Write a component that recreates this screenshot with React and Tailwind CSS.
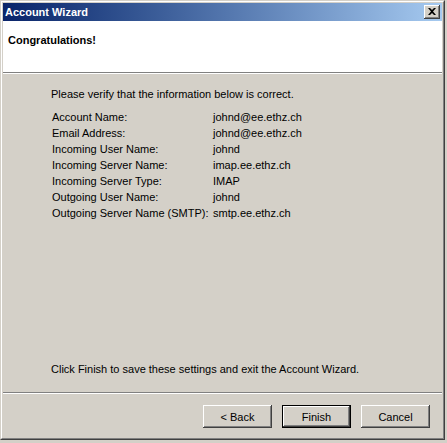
import React from 'react';

const rows = [
  ['Account Name:', 'johnd@ee.ethz.ch'],
  ['Email Address:', 'johnd@ee.ethz.ch'],
  ['Incoming User Name:', 'johnd'],
  ['Incoming Server Name:', 'imap.ee.ethz.ch'],
  ['Incoming Server Type:', 'IMAP'],
  ['Outgoing User Name:', 'johnd'],
  ['Outgoing Server Name (SMTP):', 'smtp.ee.ethz.ch'],
];

const bevel =
  'shadow-[inset_-1px_-1px_0_#404040,inset_1px_1px_0_#ffffff,inset_-2px_-2px_0_#808080,inset_2px_2px_0_#d4d0c8]';

const Button = ({ children, primary }) => (
  <button
    className={
      primary
        ? 'w-[69px] h-[23px] border border-black bg-[#d4d0c8] text-black shadow-[inset_-1px_-1px_0_#404040,inset_1px_1px_0_#ffffff,inset_-2px_-2px_0_#808080]'
        : 'w-[69px] h-[23px] bg-[#d4d0c8] text-black ' + bevel
    }
  >
    {children}
  </button>
);

const App = () => {
  return (
    <div className="w-[447px] h-[443px] bg-[#d4d0c8] font-['Liberation_Sans',Arial,sans-serif] text-[11px] leading-[16px] text-black">
      {/* window frame */}
      <div className="w-[445px] h-[440px] border-t border-l border-t-[#d4d0c8] border-l-[#d4d0c8] border-r border-b border-r-[#404040] border-b-[#404040]">
        <div className="h-full border-t border-l border-t-white border-l-white border-r border-b border-r-[#808080] border-b-[#808080]">
          <div className="h-full flex flex-col border border-[#d4d0c8]">
            {/* title bar */}
            <div className="h-[18px] flex items-center justify-between bg-gradient-to-r from-[#0a246a] to-[#a6caf0] pl-[2px] pr-[2px]">
              <span className="font-bold text-white">Account Wizard</span>
              <button className={'w-[16px] h-[14px] flex items-center justify-center bg-[#d4d0c8] ' + bevel}>
                <svg width="8" height="7" viewBox="0 0 8 7" className="mb-[1px]">
                  <path d="M0 0h2l2 2 2-2h2L5 3.5 8 7H6L4 5 2 7H0l3-3.5z" fill="#000" />
                </svg>
              </button>
            </div>

            {/* header */}
            <div className="h-[52px] bg-white pl-[5px] pt-[11px] border-b border-b-[#808080]">
              <div className="font-bold">Congratulations!</div>
            </div>
            <div className="h-px bg-white" />

            {/* body */}
            <div className="flex-1 flex flex-col pl-[48px] pt-[12px] pb-[15px] border-b border-b-[#808080]">
              <p>Please verify that the information below is correct.</p>
              <div className="mt-[7px] pl-[1px]">
                {rows.map(([label, value]) => (
                  <div key={label} className="flex">
                    <span className="w-[161px]">{label}</span>
                    <span>{value}</span>
                  </div>
                ))}
              </div>
              <p className="mt-auto">Click Finish to save these settings and exit the Account Wizard.</p>
            </div>
            <div className="h-px bg-white" />

            {/* footer */}
            <div className="h-[43px] flex items-start justify-end gap-[10px] pt-[11px] pr-[12px]">
              <Button>&lt; Back</Button>
              <Button primary>Finish</Button>
              <Button>Cancel</Button>
            </div>
          </div>
        </div>
      </div>
    </div>
  );
};

export default App;
